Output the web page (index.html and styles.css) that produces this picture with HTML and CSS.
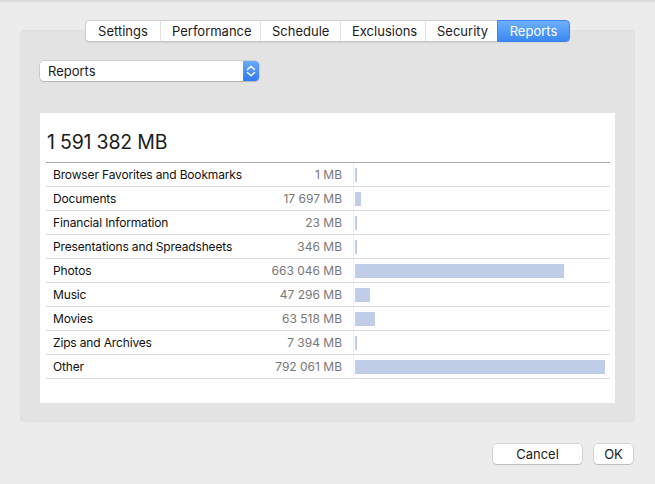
FILE: index.html
```html
<!DOCTYPE html>
<html>
<head>
<meta charset="utf-8">
<link rel="stylesheet" href="styles.css">
</head>
<body>
<div class="window">
  <div class="tabs">
    <div class="tab">Settings</div>
    <div class="tab">Performance</div>
    <div class="tab">Schedule</div>
    <div class="tab">Exclusions</div>
    <div class="tab">Security</div>
    <div class="tab active">Reports</div>
  </div>
  <div class="box">
    <div class="popup">
      <span class="popup-label">Reports</span>
      <span class="stepper">
        <svg width="16" height="20" viewBox="0 0 16 20"><path d="M4.5 8.5 L8 5.2 L11.5 8.5" fill="none" stroke="#fff" stroke-width="1.4" stroke-linecap="round" stroke-linejoin="round"/><path d="M4.5 11.5 L8 14.8 L11.5 11.5" fill="none" stroke="#fff" stroke-width="1.4" stroke-linecap="round" stroke-linejoin="round"/></svg>
      </span>
    </div>
    <div class="panel">
      <div class="total">1 591 382 MB</div>
      <div class="row"><span class="name">Browser Favorites and Bookmarks</span><span class="val">1 MB</span><span class="barcell"><span class="bar" style="width:2px"></span></span></div>
      <div class="row"><span class="name">Documents</span><span class="val">17 697 MB</span><span class="barcell"><span class="bar" style="width:6px"></span></span></div>
      <div class="row"><span class="name">Financial Information</span><span class="val">23 MB</span><span class="barcell"><span class="bar" style="width:2px"></span></span></div>
      <div class="row"><span class="name">Presentations and Spreadsheets</span><span class="val">346 MB</span><span class="barcell"><span class="bar" style="width:2px"></span></span></div>
      <div class="row"><span class="name">Photos</span><span class="val">663 046 MB</span><span class="barcell"><span class="bar" style="width:209px"></span></span></div>
      <div class="row"><span class="name">Music</span><span class="val">47 296 MB</span><span class="barcell"><span class="bar" style="width:15px"></span></span></div>
      <div class="row"><span class="name">Movies</span><span class="val">63 518 MB</span><span class="barcell"><span class="bar" style="width:20px"></span></span></div>
      <div class="row"><span class="name">Zips and Archives</span><span class="val">7 394 MB</span><span class="barcell"><span class="bar" style="width:2px"></span></span></div>
      <div class="row"><span class="name">Other</span><span class="val">792 061 MB</span><span class="barcell"><span class="bar" style="width:250px"></span></span></div>
    </div>
  </div>
  <div class="buttons">
    <div class="btn cancel">Cancel</div>
    <div class="btn ok">OK</div>
  </div>
</div>
</body>
</html>
```
FILE: styles.css
```css
html, body {
  margin: 0;
  padding: 0;
}
body {
  width: 655px;
  height: 484px;
  overflow: hidden;
  background: linear-gradient(#d4d4d4 0px, #e6e6e6 2px, #ececec 4px, #ececec 100%);
  font-family: Inter, "Liberation Sans", sans-serif;
  font-size: 13px;
  color: #1b1b1b;
}
.window {
  padding: 20px 20px 0 20px;
}
.tabs {
  display: flex;
  justify-content: center;
  height: 21px;
  position: relative;
  z-index: 1;
  margin-bottom: -11px;
}
.tab {
  background: #fff;
  height: 20px;
  line-height: 20px;
  padding: 0 11px;
  text-align: center;
  white-space: nowrap;
  border-top: 0.5px solid #cfcfcf;
  border-bottom: 1px solid #c4c4c4;
  border-left: 1px solid #e2e2e2;
  box-shadow: 0 1px 1px rgba(0,0,0,0.06);
}
.tab:first-child {
  border-left: 1px solid #cdcdcd;
  border-radius: 4px 0 0 4px;
}
.tab:nth-child(1) { width: 52px; }
.tab:nth-child(2) { width: 77px; }
.tab:nth-child(3) { width: 57px; }
.tab:nth-child(4) { width: 62px; }
.tab:nth-child(5) { width: 49px; }
.tab.active {
  width: 49px;
  color: #fff;
  background: linear-gradient(#6db0fa, #3a88f6);
  border-color: #3f84ee;
  border-left: 1px solid #3f84ee;
  border-right: 1px solid #3f84ee;
  border-radius: 0 4px 4px 0;
}
.box {
  background: #e3e3e3;
  border-radius: 5px;
  height: 392px;
  box-sizing: border-box;
  padding: 31px 20px 0 20px;
  box-shadow: inset 0 0 0 0.5px #dadada;
}
.popup {
  width: 219px;
  height: 20px;
  background: #fff;
  border-radius: 4px;
  box-shadow: 0 0 0 0.5px rgba(0,0,0,0.18), 0 1px 1px rgba(0,0,0,0.12);
  display: flex;
  align-items: center;
  justify-content: space-between;
}
.popup-label {
  padding-left: 8px;
}
.stepper {
  width: 16px;
  height: 20px;
  border-radius: 0 4px 4px 0;
  background: linear-gradient(#6aaaf9, #2f7bf0);
  display: flex;
}
.panel {
  margin-top: 32px;
  width: 575px;
  height: 290px;
  box-sizing: border-box;
  background: #fff;
  padding: 0 5px 0 6px;
}
.total {
  font-size: 19.5px;
  line-height: 24px;
  padding: 17px 0 8px 1px;
  border-bottom: 1px solid #a9a9a9;
  letter-spacing: -0.2px;
}
.row {
  display: flex;
  height: 23px;
  line-height: 24px;
  font-size: 12px;
  border-bottom: 1px solid #dcdcdc;
  white-space: nowrap;
}
.name {
  flex: 1;
  min-width: 0;
  padding-left: 7px;
  letter-spacing: -0.15px;
  color: #111;
}
.val {
  text-align: right;
  color: #777;
  padding-right: 11px;
}
.barcell {
  width: 257px;
  border-left: 1px solid #eeeeee;
  padding: 5px 0 0 1px;
  box-sizing: border-box;
}
.bar {
  display: block;
  height: 14px;
  background: #bfcee6;
}
.buttons {
  display: flex;
  justify-content: flex-end;
  gap: 12px;
  margin-top: 22px;
  padding-right: 2px;
}
.btn {
  height: 20px;
  line-height: 20px;
  background: #fff;
  border-radius: 4px;
  text-align: center;
  box-shadow: 0 0 0 0.5px rgba(0,0,0,0.2), 0 1px 1px rgba(0,0,0,0.12);
}
.cancel { width: 89px; }
.ok { width: 39px; }
```
